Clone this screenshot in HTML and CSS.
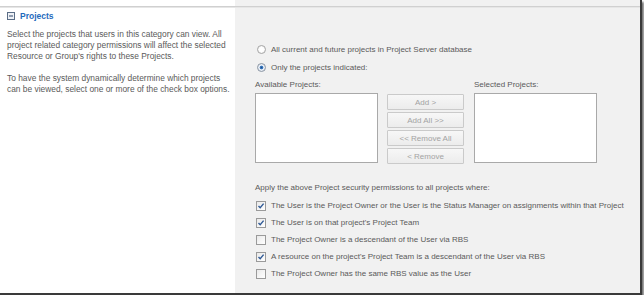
FILE: index.html
```html
<!DOCTYPE html>
<html lang="en">
<head>
  <meta charset="UTF-8">
  <title>Projects - Category Permissions</title>
  <link rel="stylesheet" href="styles.css">
</head>
<body>
<div class="window">
  <div class="rule"></div>
  <div class="section">
    <div class="info">
      <h3 class="title">
        <svg class="toggle" width="8" height="8" viewBox="0 0 8 8">
          <rect x="0.5" y="0.5" width="7" height="7" fill="#eef1f6" stroke="#5a6d86"/>
          <rect x="2" y="3.5" width="4" height="1" fill="#2f4766"/>
        </svg>
        Projects
      </h3>
      <p>Select the projects that users in this category can view. All project related category permissions will affect the selected Resource or Group's rights to these Projects.</p>
      <p>To have the system dynamically determine which projects can be viewed, select one or more of the check box options.</p>
    </div>
    <div class="fields">
      <div class="option"><span class="radio"></span>All current and future projects in Project Server database</div>
      <div class="option"><span class="radio on"></span>Only the projects indicated:</div>
      <div class="picker">
        <div class="list-col">
          <div class="list-label">Available Projects:</div>
          <div class="listbox"></div>
        </div>
        <div class="buttons">
          <button type="button" disabled>Add &gt;</button>
          <button type="button" disabled>Add All &gt;&gt;</button>
          <button type="button" disabled>&lt;&lt; Remove All</button>
          <button type="button" disabled>&lt; Remove</button>
        </div>
        <div class="list-col">
          <div class="list-label">Selected Projects:</div>
          <div class="listbox"></div>
        </div>
      </div>
      <div class="apply">Apply the above Project security permissions to all projects where:</div>
      <div class="option check-row"><span class="check on"></span>The User is the Project Owner or the User is the Status Manager on assignments within that Project</div>
      <div class="option check-row"><span class="check on"></span>The User is on that project's Project Team</div>
      <div class="option check-row"><span class="check"></span>The Project Owner is a descendant of the User via RBS</div>
      <div class="option check-row"><span class="check on"></span>A resource on the project's Project Team is a descendant of the User via RBS</div>
      <div class="option check-row"><span class="check"></span>The Project Owner has the same RBS value as the User</div>
    </div>
  </div>
</div>
</body>
</html>
```

FILE: styles.css
```css
html, body { margin: 0; padding: 0; background: #fff; }
body { font-family: "Liberation Sans", Arial, sans-serif; font-size: 8px; color: #5a5a5a; }

.window {
  width: 640px; height: 293px; overflow: hidden;
  background: linear-gradient(to right, #fff 235px, #f1f1f1 235px);
  border-right: 2px solid #3a3a3a; border-bottom: 2px solid #3a3a3a;
  box-shadow: 2px 2px 2px rgba(0,0,0,0.55);
}
.rule { height: 1px; margin-top: 6px; background: #d0d0d0; border-bottom: 1px solid #e6e6e6; }

.section { display: flex; }
.info { width: 235px; box-sizing: border-box; padding: 2px 5px 0 7px; }
.title {
  display: flex; align-items: center; gap: 5px; margin: 0;
  height: 12px; line-height: 12px; font-size: 8.5px; font-weight: 700; color: #1f6bbd;
}
.info p { margin: 7px 0 0 0; line-height: 11px; font-size: 8.4px; }
.info p + p { margin-top: 11px; }

.fields { flex: 1; padding: 32px 0 0 20px; }
.option { display: flex; align-items: center; height: 18px; }
.check-row { height: 17px; }

.radio {
  width: 7px; height: 7px; border-radius: 50%; margin: 0 5px 0 2px;
  border: 1px solid #a6a6a6; background: radial-gradient(circle, #fff 40%, #e4e4e4 100%);
}
.radio.on { background: radial-gradient(circle, #1d4f8e 0, #3f7ec4 30%, #e8eef6 45%, #dfe4ea 100%); border-color: #8b96a4; }

.check {
  width: 8px; height: 8px; margin: 0 5px 0 1px;
  border: 1px solid #9a9a9a; background: linear-gradient(135deg, #e9e9e9, #fff);
}
.check.on {
  background:
    url("data:image/svg+xml;utf8,<svg xmlns='http://www.w3.org/2000/svg' width='8' height='8' viewBox='0 0 8 8'><path d='M1.5 4 L3.2 5.8 L6.6 1.6' fill='none' stroke='%23305a96' stroke-width='1.4'/></svg>") center/8px 8px no-repeat,
    linear-gradient(135deg, #e9e9e9, #fff);
}

.picker { display: flex; margin-top: 3px; }
.list-col { display: flex; flex-direction: column; }
.list-label { line-height: 12px; height: 12px; margin-bottom: 2px; }
.listbox { width: 121px; height: 68px; background: #fff; border: 1px solid #a9a9a9; }
.buttons { display: flex; flex-direction: column; gap: 2px; margin: 15px 10px 0 9px; }
.buttons button {
  width: 77px; height: 16px; padding: 0; font: inherit; font-size: 8px; color: #a3a3a3;
  border: 1px solid #cacaca; border-radius: 1px; background: linear-gradient(#f7f7f7, #ececec);
}

.apply { height: 18px; line-height: 18px; margin-top: 15px; }
```
